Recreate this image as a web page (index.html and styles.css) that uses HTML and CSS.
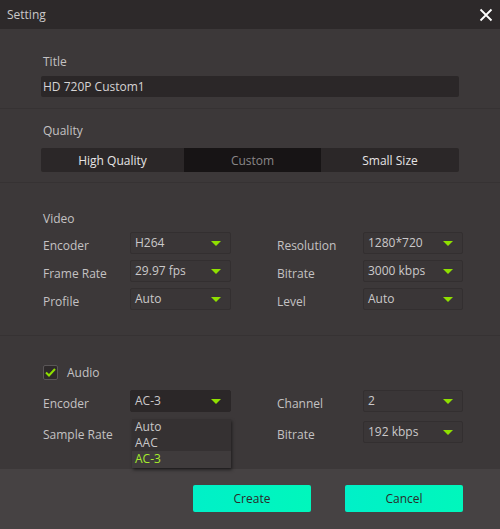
FILE: index.html
```html
<!DOCTYPE html>
<html lang="en">
<head>
    <meta charset="UTF-8">
    <title>Setting</title>
    <link rel="stylesheet" href="styles.css">
</head>
<body>
    <div class="dialog">
        <div class="header">
            <span class="header-title">Setting</span>
            <svg class="close" width="14" height="14" viewBox="0 0 14 14">
                <path d="M1.5 1.5 L12.5 12.5 M12.5 1.5 L1.5 12.5" stroke="#ffffff" stroke-width="1.8" fill="none"/>
            </svg>
        </div>

        <div class="section section-title">
            <div class="label">Title</div>
            <div class="text-input">HD 720P Custom1</div>
        </div>

        <div class="section section-quality">
            <div class="label">Quality</div>
            <div class="segmented">
                <div class="seg seg-high">High Quality</div>
                <div class="seg seg-custom">Custom</div>
                <div class="seg seg-small">Small Size</div>
            </div>
        </div>

        <div class="section section-video">
            <div class="label">Video</div>
            <div class="grid">
                <div class="field-label">Encoder</div>
                <div class="select">H264<i class="arrow"></i></div>
                <div class="field-label right">Resolution</div>
                <div class="select">1280*720<i class="arrow"></i></div>

                <div class="field-label">Frame Rate</div>
                <div class="select">29.97 fps<i class="arrow"></i></div>
                <div class="field-label right">Bitrate</div>
                <div class="select">3000 kbps<i class="arrow"></i></div>

                <div class="field-label">Profile</div>
                <div class="select">Auto<i class="arrow"></i></div>
                <div class="field-label right">Level</div>
                <div class="select">Auto<i class="arrow"></i></div>
            </div>
        </div>

        <div class="section section-audio">
            <div class="check-row">
                <span class="checkbox">
                    <svg width="11" height="9" viewBox="0 0 11 9">
                        <path d="M1 4.5 L4 7.5 L10 1" stroke="#8fe000" stroke-width="2" fill="none"/>
                    </svg>
                </span>
                <span class="check-text">Audio</span>
            </div>
            <div class="grid grid-audio">
                <div class="field-label">Encoder</div>
                <div class="select-wrap">
                    <div class="select open">AC-3<i class="arrow"></i></div>
                    <div class="dropdown">
                        <div class="option">Auto</div>
                        <div class="option">AAC</div>
                        <div class="option active">AC-3</div>
                    </div>
                </div>
                <div class="field-label right">Channel</div>
                <div class="select">2<i class="arrow"></i></div>

                <div class="field-label">Sample Rate</div>
                <div></div>
                <div class="field-label right">Bitrate</div>
                <div class="select">192 kbps<i class="arrow"></i></div>
            </div>
        </div>

        <div class="footer">
            <button class="button">Create</button>
            <button class="button">Cancel</button>
        </div>
    </div>
</body>
</html>
```

FILE: styles.css
```css
body {
    margin: 0;
    font-family: "Open Sans", "Noto Sans", Arial, sans-serif;
    font-size: 12px;
    color: #c4c2c3;
    background-color: #3c3839;
}
.dialog {
    width: 500px;
    height: 529px;
    display: flex;
    flex-direction: column;
    background-color: #3c3839;
}
.header {
    height: 29px;
    display: flex;
    align-items: center;
    justify-content: space-between;
    padding: 0 7px 0 7px;
    background-color: #2d292a;
}
.header-title {
    color: #cbc9ca;
}
.close {
    display: block;
}
.section {
    padding-left: 41px;
    border-bottom: 1px solid #363233;
}
.label {
    padding-left: 2px;
    line-height: 16px;
}
.section-title {
    padding-top: 25px;
    box-sizing: border-box;
    height: 80px;
}
.text-input {
    width: 418px;
    height: 21px;
    margin-top: 6px;
    box-sizing: border-box;
    padding-left: 2px;
    line-height: 21px;
    background-color: #2b2728;
    border-radius: 2px;
    color: #d6d4d5;
}
.section-quality {
    height: 74px;
    padding-top: 14px;
    box-sizing: border-box;
}
.segmented {
    display: flex;
    width: 418px;
    height: 24px;
    margin-top: 9px;
    background-color: #2b2728;
    border-radius: 2px;
    overflow: hidden;
}
.seg {
    display: flex;
    align-items: center;
    justify-content: center;
    color: #e6e4e5;
}
.seg-high {
    width: 143px;
}
.seg-custom {
    width: 137px;
    background-color: #171415;
    color: #8a8788;
}
.seg-small {
    flex: 1;
}
.section-video {
    height: 153px;
    padding-top: 28px;
    box-sizing: border-box;
}
.grid {
    display: grid;
    grid-template-columns: 89px 101px 132px 100px;
    row-gap: 6px;
    margin-top: 5px;
}
.field-label {
    padding-left: 2px;
    align-self: center;
    padding-top: 4px;
}
.field-label.right {
    padding-left: 46px;
}
.select {
    position: relative;
    height: 22px;
    box-sizing: border-box;
    padding-left: 4px;
    line-height: 20px;
    border: 1px solid #332f30;
    background-color: #3a3637;
    border-radius: 2px;
    color: #cbc9ca;
}
.arrow {
    position: absolute;
    right: 9px;
    top: 8px;
    width: 0;
    height: 0;
    border-left: 5px solid transparent;
    border-right: 5px solid transparent;
    border-top: 5px solid #8fe000;
}
.section-audio {
    height: 133px;
    padding-top: 28px;
    box-sizing: border-box;
    border-bottom: none;
}
.check-row {
    display: flex;
    align-items: center;
    padding-left: 2px;
}
.checkbox {
    width: 15px;
    height: 15px;
    box-sizing: border-box;
    border: 1px solid #5a5657;
    background-color: #2e2a2b;
    border-radius: 2px;
    display: flex;
    align-items: center;
    justify-content: center;
}
.check-text {
    margin-left: 9px;
}
.grid-audio {
    margin-top: 9px;
    row-gap: 9px;
}
.select-wrap {
    position: relative;
}
.select.open {
    background-color: #2b2728;
    border-color: #2b2728;
}
.dropdown {
    position: absolute;
    left: 2px;
    top: 29px;
    width: 99px;
    background-color: #353132;
    box-shadow: 1px 2px 3px rgba(0, 0, 0, 0.5);
    z-index: 2;
}
.option {
    height: 16px;
    line-height: 16px;
    padding-left: 3px;
    color: #c9c7c8;
}
.option.active {
    height: 17px;
    background-color: #3f3b3c;
    color: #a6ec2c;
}
.footer {
    flex: 1;
    display: flex;
    justify-content: flex-end;
    align-items: flex-start;
    gap: 34px;
    padding: 16px 37px 0 0;
    background-color: #464243;
}
.button {
    width: 118px;
    height: 27px;
    border: none;
    border-radius: 2px;
    background: linear-gradient(90deg, #00f0c8, #00f7bc);
    color: #2a2a2a;
    font-family: inherit;
    font-size: 12px;
    cursor: pointer;
}
```
